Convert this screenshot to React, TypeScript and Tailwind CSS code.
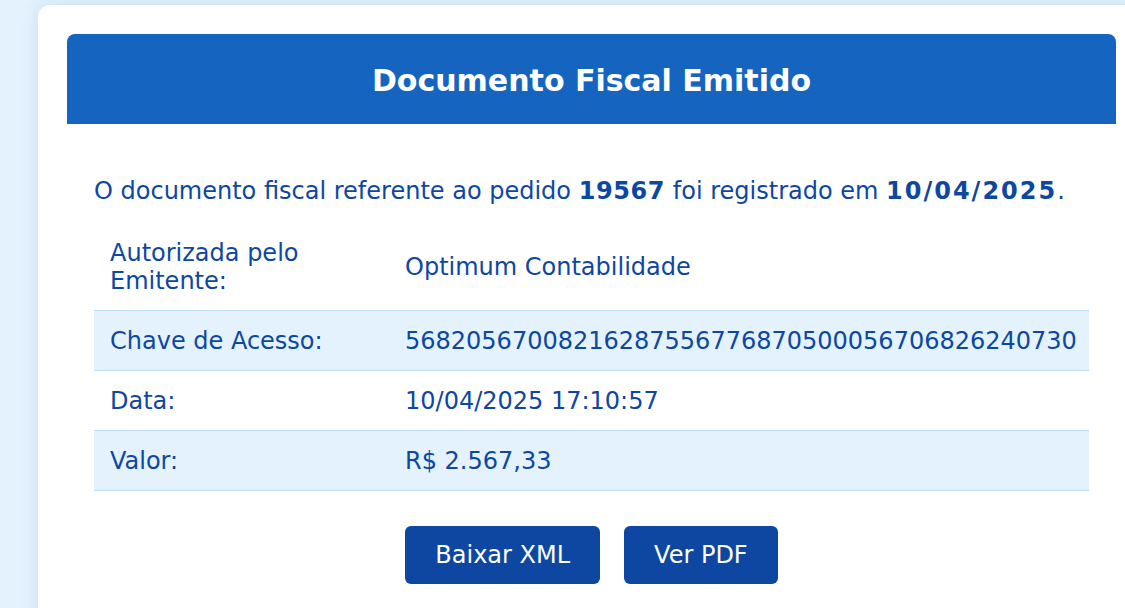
import React from "react";

const rows: { label: string; value: string }[] = [
  { label: "Autorizada pelo Emitente:", value: "Optimum Contabilidade" },
  { label: "Chave de Acesso:", value: "56820567008216287556776870500056706826240730" },
  { label: "Data:", value: "10/04/2025 17:10:57" },
  { label: "Valor:", value: "R$ 2.567,33" },
];

export default function App() {
  return (
    <div
      className="w-[1125px] h-[608px] overflow-hidden bg-[#e3f2fd] pt-[5px] pl-[38px]"
      style={{ fontFamily: '"DejaVu Sans", Verdana, sans-serif' }}
    >
      <div className="w-[1107px] h-[640px] bg-white rounded-[12px] shadow-[0_0_18px_rgba(13,71,161,0.12)] px-[29px] pt-[29px]">
        <div className="h-[90px] bg-[#1565c0] rounded-t-[8px] flex items-center justify-center pt-[3px]">
          <h1 className="text-white font-bold text-[30px] leading-none">Documento Fiscal Emitido</h1>
        </div>
        <div className="px-[27px] pt-[52px] text-[#0d47a1]">
          <p className="text-[24px] leading-[28px] pt-[1px]">
            O documento fiscal referente ao pedido <strong className="tracking-[0.6px]">19567</strong> foi registrado em{" "}
            <strong className="tracking-[2px]">10/04/2025</strong>.
          </p>
          <div className="mt-[18px]">
            {rows.map((r, i) => (
              <div
                key={r.label}
                className={`flex text-[24px] leading-[28px] border-b border-[#bbdefb] ${i % 2 === 1 ? "bg-[#e3f2fd]" : "bg-white"}`}
              >
                <div className="w-[295px] shrink-0 px-[16px] py-[15.5px] flex items-center">
                  <span className="max-w-[230px]">{r.label}</span>
                </div>
                <div className="px-[16px] py-[15.5px] flex items-center">{r.value}</div>
              </div>
            ))}
          </div>
          <div className="flex justify-center gap-[24px] mt-[35px]">
            <button className="h-[58px] px-[30px] bg-[#0d47a1] text-white rounded-[6px] text-[24px]">Baixar XML</button>
            <button className="h-[58px] px-[30px] bg-[#0d47a1] text-white rounded-[6px] text-[24px]">Ver PDF</button>
          </div>
        </div>
      </div>
    </div>
  );
}
